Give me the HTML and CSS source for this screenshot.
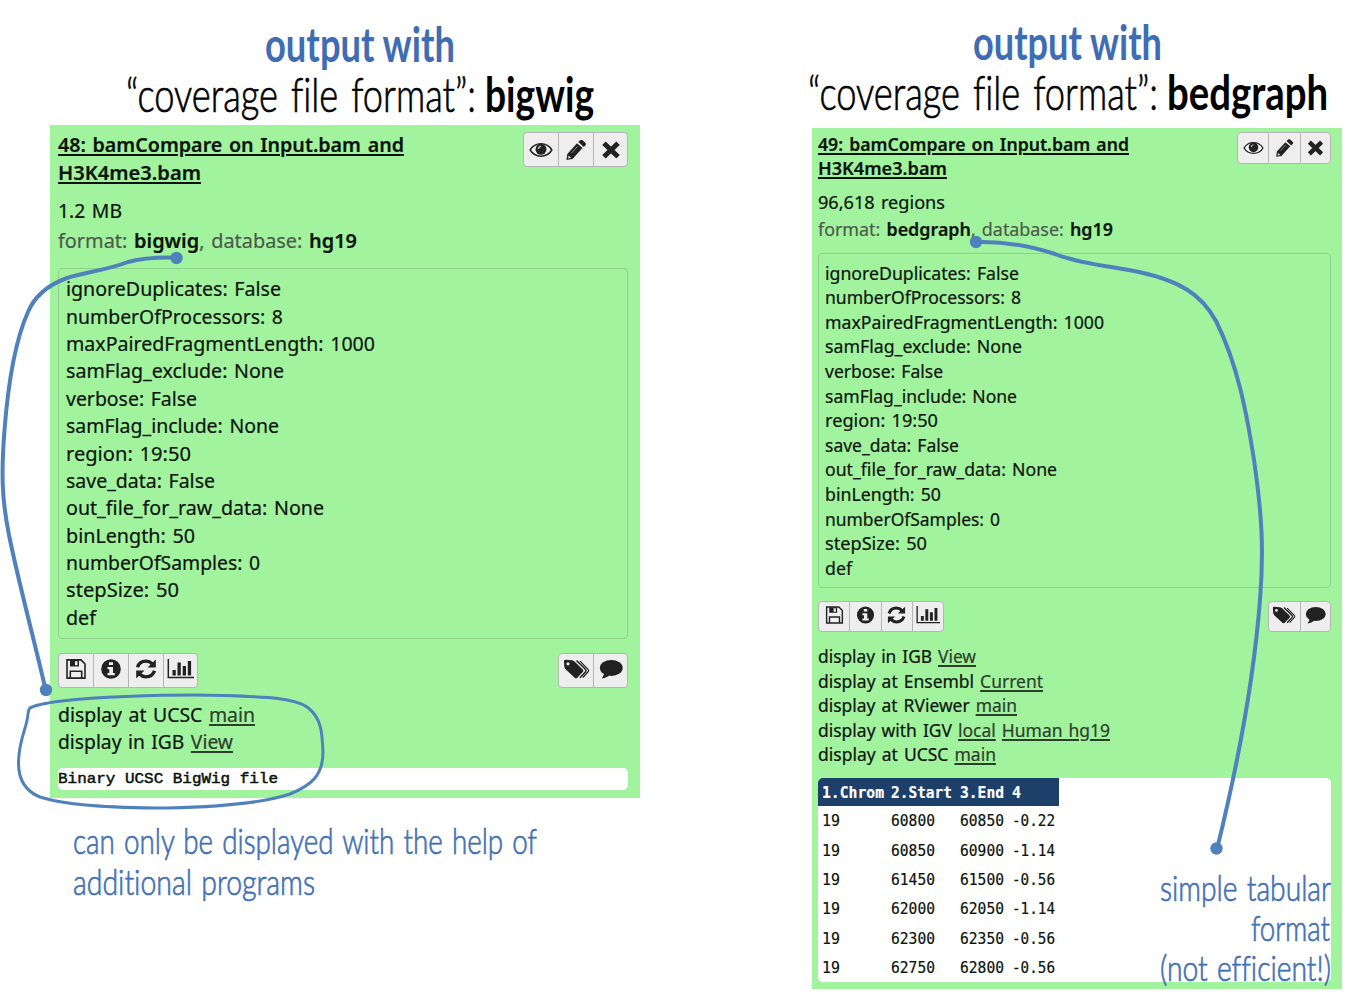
FILE: index.html
```
<!DOCTYPE html>
<html lang="en">
<head>
<meta charset="utf-8">
<title>bamCompare output formats</title>
<link rel="stylesheet" href="styles.css">
</head>
<body>
<svg class="symbols" width="0" height="0">
  <symbol id="eye" viewBox="0 0 24 20"><path d="M1.2 10C6 1.8 18 1.8 22.8 10C18 18.200 6 18.200 1.200 10Z" fill="#f4f4f4" stroke="#222" stroke-width="1.500"/><circle cx="12" cy="9.300" r="5.500" fill="#222"/><path d="M9.300 9Q9.500 6.600 12 6.300" fill="none" stroke="#bbb" stroke-width="1.300"/></symbol>
  <symbol id="pencil" viewBox="0 0 24 20"><path d="M2.500 20L3.300 14L13 3.300L18.500 8L8.500 19ZM14.300 2L16.500 0Q17.700 -.3 19 .6L21.500 3Q22.400 4.200 21.500 5.200L19.700 7Z" fill="#222"/><path d="M4.600 15.500L7 17.900L4.200 18.500Z" fill="#eee"/><path d="M7.500 13L13.500 6.400" stroke="#888" stroke-width="1"/></symbol>
  <symbol id="cross" viewBox="0 0 24 20"><path d="M6.800 5L17.200 15M17.200 5L6.800 15" stroke="#222" stroke-width="5" stroke-linecap="square" stroke-linejoin="round"/></symbol>
  <symbol id="save" viewBox="0 0 24 20"><path d="M3 .9H17L21 5V19.100H3Z" fill="none" stroke="#222" stroke-width="1.600"/><path d="M6 1H15V7.500H6Z" fill="#222"/><path d="M11 2.200H13.500V6.200H11Z" fill="#eee"/><path d="M6.300 19V12.200H17.700V19" fill="none" stroke="#222" stroke-width="1.600"/></symbol>
  <symbol id="info" viewBox="0 0 24 20"><circle cx="12" cy="10" r="9.800" fill="#222"/><path d="M10 3.200H14V6H10ZM8.500 8H14V14H15.800V16.300H8.500V14H10.300V10.200H8.500Z" fill="#eee"/></symbol>
  <symbol id="refresh" viewBox="0 0 24 20"><path d="M3.500 8.200Q5.500 2.100 12 2.100Q15.500 2.100 18.500 5M20.500 11.800Q18.500 17.900 12 17.900Q8.500 17.900 5.500 15" fill="none" stroke="#222" stroke-width="3.400"/><path d="M21.800 .6V8.400H13.500ZM2.200 19.400V11.600H10.500Z" fill="#222"/></symbol>
  <symbol id="chart" viewBox="0 0 27 20"><path d="M1.300 0V18.600H27" fill="none" stroke="#222" stroke-width="1.500"/><path d="M5.500 11H8.800V16.500H5.500ZM10.500 3.500H13.800V16.500H10.500ZM15.700 7H19V16.500H15.700ZM20.800 2H24.100V16.500H20.800Z" fill="#222"/></symbol>
  <symbol id="tags" viewBox="0 0 27 20"><path d="M1 2.200Q1 .8 2.400 .8L9 1.200Q10.500 1.500 11.500 2.500L20 10.800Q20.800 11.800 20 12.700L14 19Q13 19.800 12 19L2.800 10.500Q1.500 9 1.300 7.500Z" fill="#222"/><circle cx="5" cy="4.800" r="1.600" fill="#eee"/><path d="M13.500 1.500L22.600 10.500Q23.400 11.600 22.600 12.700L17 18.800" fill="none" stroke="#222" stroke-width="1.500"/><path d="M17 2.200L25.300 10.700Q26 11.600 25.300 12.500L19.800 18.500" fill="none" stroke="#222" stroke-width="1.200"/></symbol>
  <symbol id="comment" viewBox="0 0 24 20"><ellipse cx="12.300" cy="8.900" rx="11.400" ry="8" fill="#222"/><path d="M5 13Q5.500 16.500 2.800 19.600Q8.500 18.800 11.500 15Z" fill="#222"/></symbol>
</svg>

<main class="page">
  <section class="column bigwig">
    <header class="heading">
      <div class="hand row-output"><b data-w="190">output with</b></div>
      <div class="hand row-format"><span class="slot"><span data-w="350">“coverage file format”:</span></span><b data-w="109">bigwig</b></div>
    </header>
    <article class="panel">
      <div class="top">
        <h2><span data-w="346">48: bamCompare on Input.bam and</span><br><span data-w="143">H3K4me3.bam</span></h2>
        <div class="buttons"><i><svg><use href="#eye"/></svg></i><i><svg><use href="#pencil"/></svg></i><i><svg><use href="#cross"/></svg></i></div>
      </div>
      <p class="size"><span data-w="64">1.2 MB</span></p>
      <p class="meta"><span data-w="299">format: <b>bigwig</b>, database: <b>hg19</b></span></p>
      <div class="params">
        <p><span data-w="215">ignoreDuplicates: False</span></p>
        <p><span data-w="217">numberOfProcessors: 8</span></p>
        <p><span data-w="309">maxPairedFragmentLength: 1000</span></p>
        <p><span data-w="218">samFlag_exclude: None</span></p>
        <p><span data-w="131">verbose: False</span></p>
        <p><span data-w="213">samFlag_include: None</span></p>
        <p><span data-w="125">region: 19:50</span></p>
        <p><span data-w="149">save_data: False</span></p>
        <p><span data-w="258">out_file_for_raw_data: None</span></p>
        <p><span data-w="129">binLength: 50</span></p>
        <p><span data-w="194">numberOfSamples: 0</span></p>
        <p><span data-w="113">stepSize: 50</span></p>
        <p><span data-w="30">def</span></p>
      </div>
      <div class="tools">
        <div class="buttons"><i><svg><use href="#save"/></svg></i><i><svg><use href="#info"/></svg></i><i><svg><use href="#refresh"/></svg></i><i><svg class="wide"><use href="#chart"/></svg></i></div>
        <div class="buttons"><i><svg class="wide"><use href="#tags"/></svg></i><i><svg><use href="#comment"/></svg></i></div>
      </div>
      <div class="links">
        <p><span data-w="197">display at UCSC <u>main</u></span></p>
        <p><span data-w="175">display in IGB <u>View</u></span></p>
      </div>
      <div class="peek"><span data-w="220">Binary UCSC BigWig file</span></div>
    </article>
    <div class="hand note"><p><span data-w="464">can only be displayed with the help of</span></p><p><span data-w="242">additional programs</span></p></div>
  </section>

  <section class="column bedgraph">
    <header class="heading">
      <div class="hand row-output"><b data-w="189">output with</b></div>
      <div class="hand row-format"><span class="slot"><span data-w="350">“coverage file format”:</span></span><b data-w="161">bedgraph</b></div>
    </header>
    <article class="panel">
      <div class="top">
        <h2><span data-w="311">49: bamCompare on Input.bam and</span><br><span data-w="129">H3K4me3.bam</span></h2>
        <div class="buttons"><i><svg><use href="#eye"/></svg></i><i><svg><use href="#pencil"/></svg></i><i><svg><use href="#cross"/></svg></i></div>
      </div>
      <p class="size"><span data-w="127">96,618 regions</span></p>
      <p class="meta"><span data-w="295">format: <b>bedgraph</b>, database: <b>hg19</b></span></p>
      <div class="params">
        <p><span data-w="194">ignoreDuplicates: False</span></p>
        <p><span data-w="196">numberOfProcessors: 8</span></p>
        <p><span data-w="279">maxPairedFragmentLength: 1000</span></p>
        <p><span data-w="197">samFlag_exclude: None</span></p>
        <p><span data-w="118">verbose: False</span></p>
        <p><span data-w="192">samFlag_include: None</span></p>
        <p><span data-w="113">region: 19:50</span></p>
        <p><span data-w="134">save_data: False</span></p>
        <p><span data-w="232">out_file_for_raw_data: None</span></p>
        <p><span data-w="116">binLength: 50</span></p>
        <p><span data-w="175">numberOfSamples: 0</span></p>
        <p><span data-w="102">stepSize: 50</span></p>
        <p><span data-w="27">def</span></p>
      </div>
      <div class="tools">
        <div class="buttons"><i><svg><use href="#save"/></svg></i><i><svg><use href="#info"/></svg></i><i><svg><use href="#refresh"/></svg></i><i><svg class="wide"><use href="#chart"/></svg></i></div>
        <div class="buttons"><i><svg class="wide"><use href="#tags"/></svg></i><i><svg><use href="#comment"/></svg></i></div>
      </div>
      <div class="links">
        <p><span data-w="158">display in IGB <u>View</u></span></p>
        <p><span data-w="225">display at Ensembl <u>Current</u></span></p>
        <p><span data-w="199">display at RViewer <u>main</u></span></p>
        <p><span data-w="292">display with IGV <u>local</u> <u>Human hg19</u></span></p>
        <p><span data-w="178">display at UCSC <u>main</u></span></p>
      </div>
      <div class="data">
        <div class="line head"><span data-w="62">1.Chrom</span><span data-w="61">2.Start</span><span data-w="44">3.End</span><span data-w="9">4</span></div>
        <div class="line"><span data-w="18">19</span><span data-w="44">60800</span><span data-w="44">60850</span><span data-w="43">-0.22</span></div>
        <div class="line"><span data-w="18">19</span><span data-w="44">60850</span><span data-w="44">60900</span><span data-w="43">-1.14</span></div>
        <div class="line"><span data-w="18">19</span><span data-w="44">61450</span><span data-w="44">61500</span><span data-w="43">-0.56</span></div>
        <div class="line"><span data-w="18">19</span><span data-w="44">62000</span><span data-w="44">62050</span><span data-w="43">-1.14</span></div>
        <div class="line"><span data-w="18">19</span><span data-w="44">62300</span><span data-w="44">62350</span><span data-w="43">-0.56</span></div>
        <div class="line"><span data-w="18">19</span><span data-w="44">62750</span><span data-w="44">62800</span><span data-w="43">-0.56</span></div>
      </div>
    </article>
    <div class="hand note"><p><span data-w="171">simple tabular</span></p><p><span data-w="79">format</span></p><p><span data-w="171">(not efficient!)</span></p></div>
  </section>
</main>

<svg class="marks" width="1371" height="996" fill="none" stroke="#4f81bd" stroke-linecap="round">
  <path stroke-width="4" d="M176.500 257.700C155 257 143 258 128 262C104 271 85 272 67 278C48 285 35 295 28 312C14 343 8 385 4.500 430C1 475 2 500 9 535C18 580 31 627 45.700 690"/>
  <path stroke-width="4" d="M976 242C1005 241 1030 246 1055 254C1080 264 1110 266 1139 272C1180 281 1201 294 1216 321C1238 365 1247 415 1254 460C1262 515 1264 550 1260 600C1253 690 1234 780 1217 849"/>
  <path stroke-width="3" d="M30 708C38 703 75 698 126 696.500C165 695 195 694.500 225 695.500C270 697 294 698 307 707C322 718 322 733 323 752C323 775 312 785 290 794C260 804 215 807 168 808C125 808 70 807 40 797C20 789 17 772 19 755C21 735 27 727 28 714Q28 710 30 708Z"/>
  <g fill="#4f81bd" stroke="none"><circle cx="176.500" cy="258" r="6.200"/><circle cx="46" cy="690" r="6.200"/><circle cx="976" cy="242" r="6.200"/><circle cx="1216.500" cy="848.500" r="6.200"/></g>
</svg>
<script src="fit.js"></script>
</body>
</html>
```
FILE: styles.css
```
* { box-sizing: border-box; }
body { position: relative; margin: 0; width: 1371px; height: 996px; overflow: hidden; background: #fff; color: #0b130b; font-family: "Noto Sans", "Open Sans", sans-serif; }
p, h2 { margin: 0; }
.symbols { position: absolute; }
.marks { position: absolute; left: 0; top: 0; display: block; pointer-events: none; }
.page { display: flex; height: 996px; }
.column { position: relative; flex: none; }
.bigwig { --line: 27.36px; --cell: 35px; width: 762px; padding: 18.500px 0 0 50px; }
.bedgraph { --line: 24.6px; --cell: 31.400px; width: 609px; padding: 17px 0 0 50px; }

[data-w] { display: inline-block; white-space: nowrap; transform-origin: 0 50%; }
.hand { font-family: Lato, sans-serif; font-weight: 300; font-variant-ligatures: none; white-space: nowrap; }
.hand b { font-weight: 700; }
.heading .hand { font-size: 47px; line-height: 50px; height: 50.400px; color: #000; }
.heading .row-output { color: #3f6db3; }
.row-format { display: flex; }
.slot { flex: none; width: 359px; -webkit-text-stroke: 0.700px; word-spacing: 4px; }
.bigwig .row-output { padding-left: 215px; }
.bigwig .row-format { padding-left: 76px; }
.bedgraph .row-output { padding-left: 161px; }
.bedgraph .row-format { margin-left: -4px; }

.panel { background: #a2f39e; -webkit-text-stroke: 0.200px; }
.bigwig .panel { width: 590px; height: 673px; margin-top: 5.700px; padding: 6.500px 12px 0 8px; font-size: 19.500px; line-height: var(--line); }
.bedgraph .panel { width: 530px; height: 861px; margin-top: 10.200px; padding: 3.700px 11px 0 6px; font-size: 17.600px; line-height: var(--line); }
.top { display: flex; justify-content: space-between; height: calc(var(--line) * 2); }
h2 { font-size: inherit; font-weight: 600; white-space: nowrap; }
h2 span { text-decoration: underline; text-decoration-thickness: 1.500px; text-underline-offset: 2px; }
p { height: var(--line); white-space: nowrap; }
.panel p, h2 { word-spacing: 1.500px; }
.size { margin-top: 10.500px; }
.meta { margin-top: 3px; color: #4c5a4c; }
.meta b { color: #0b130b; font-weight: 600; }
.bedgraph .size { margin-top: 8.700px; }
.bedgraph .meta { margin-top: 2.400px; }
.params { height: 371px; margin-top: 13.500px; padding: 6.500px 7px; border: 1.500px solid #8fd08d; border-radius: 4px; }
.bedgraph .params { height: 335px; margin-top: 11.500px; padding: 7px 6px; }

.buttons { display: flex; flex: none; width: max-content; height: var(--cell); border: 1.500px solid #b5b5b5; border-radius: 4px; background: #eee; overflow: hidden; }
.top .buttons { margin-top: 1px; }
.bedgraph .top .buttons { margin-top: .5px; }
.buttons i { display: flex; align-items: center; justify-content: center; width: var(--cell); height: 100%; border-left: 1.500px solid #b5b5b5; }
.buttons i:first-child { border-left: 0; width: calc(var(--cell) - 1px); }
.buttons i:last-child { width: calc(var(--cell) - 1px); }
.buttons svg { width: 24px; height: 20px; }
.buttons svg.wide { width: 27px; height: 20px; }
.bedgraph .buttons svg { width: 21px; height: 18px; }
.bedgraph .buttons svg.wide { width: 24px; height: 18px; }
.tools { display: flex; justify-content: space-between; margin-top: 14px; }
.tools .buttons i { padding-bottom: 3px; }
.links { margin-top: 12.700px; }
.links u { color: #2c402c; text-underline-offset: 2px; text-decoration-thickness: 1.500px; }
.bedgraph .tools { margin-top: 13px; }
.bedgraph .links { margin-top: 12px; }
.peek { height: 22px; margin-top: 12.800px; border-radius: 5px; background: #fff; font: 15.500px/22px "Liberation Mono", monospace; -webkit-text-stroke: 0.500px; }

.data { height: 204px; margin-top: 11px; border-radius: 5px; overflow: hidden; background: #fff; font: 15.500px/31.300px "DejaVu Sans Mono", monospace; }
.line { display: grid; grid-template-columns: 69px 69px 52px 47px; width: 241px; height: 29.300px; padding-left: 4px; }
.head { height: 28.400px; line-height: 30px; background: #1c4069; color: #fff; font-weight: bold; }

.note { color: #4270b4; font-size: 35px; line-height: 40.500px; word-spacing: 2px; -webkit-text-stroke: 0.700px; }
.note p { height: 40.500px; }
.bigwig .note { padding: 22.500px 0 0 23px; }
.bedgraph .note { position: absolute; left: 398px; top: 866.500px; width: 171px; line-height: 40px; }
.bedgraph .note p { height: 40px; }
.bedgraph .note p:nth-child(2) { padding-left: 91px; }
```
FILE: fit.js
```
document.querySelectorAll('[data-w]').forEach(function (el) {
  var range = document.createRange();
  range.selectNodeContents(el);
  var natural = range.getBoundingClientRect().width;
  el.style.transform = 'scaleX(' + (Number(el.dataset.w) / natural) + ')';
});
```
